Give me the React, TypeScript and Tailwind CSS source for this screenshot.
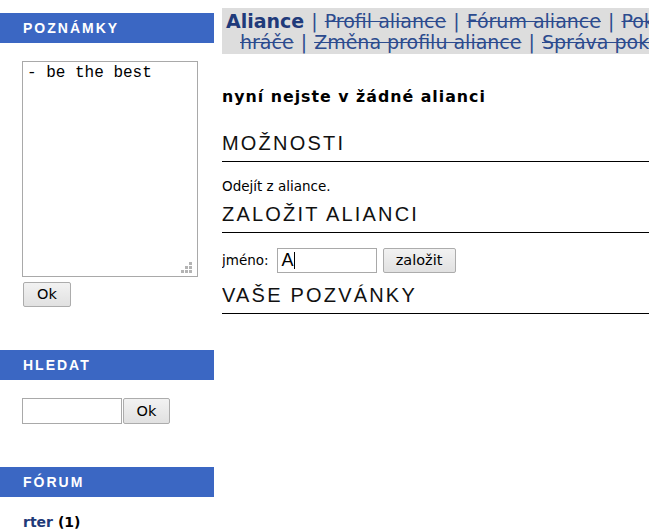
import React from "react"

const sans = "font-['DejaVu_Sans',Verdana,sans-serif]"

function SideBar({ title }: { title: string }) {
  return (
    <div className="h-[30px] bg-[#3b67c3] pl-[23px] flex items-center">
      <span className="font-['Liberation_Sans',Arial,sans-serif] font-bold text-[14px] tracking-[2px] text-white">
        {title}
      </span>
    </div>
  )
}

function Btn({ children, className = "" }: { children: React.ReactNode; className?: string }) {
  return (
    <button
      className={`h-[25px] border border-[#acacac] rounded-[2px] bg-gradient-to-b from-[#f2f2f2] to-[#e1e1e1] text-[14.5px] text-black ${sans} ${className}`}
    >
      {children}
    </button>
  )
}

function Heading({ children }: { children: React.ReactNode }) {
  return (
    <h2 className="font-['Liberation_Sans',Arial,sans-serif] text-[20px] leading-[24px] tracking-[2.2px] text-[#111] pb-[6px] border-b border-black">
      {children}
    </h2>
  )
}

function Sep() {
  return <span className="mx-[1px] text-[#2c4b8e]"> | </span>
}

function ResizeGrip() {
  const dots = [
    [2, 0],
    [1, 1],
    [2, 1],
    [0, 2],
    [1, 2],
    [2, 2],
  ]
  return (
    <svg className="absolute right-[5px] bottom-[3px]" width="11" height="11" viewBox="0 0 11 11">
      {dots.map(([c, r]) => (
        <rect key={`${c}-${r}`} x={c * 4} y={r * 4} width="3" height="3" fill="#b4b4b4" />
      ))}
    </svg>
  )
}

export default function App() {
  return (
    <div className="flex w-[649px] h-[530px] overflow-hidden bg-white">
      {/* Sidebar */}
      <aside className="w-[214px] shrink-0 pt-[13px]">
        <SideBar title="POZNÁMKY" />
        <div className="relative ml-[22px] mt-[18px] w-[176px] h-[216px] border border-[#a9a9a9] bg-white">
          <textarea
            defaultValue="- be the best"
            className="w-full h-full resize-none outline-none pl-[4px] pt-[2px] font-['Liberation_Mono','Courier_New',monospace] text-[16px] leading-[18px] text-black"
          />
          <ResizeGrip />
        </div>
        <div className="ml-[23px] mt-[4px]">
          <Btn className="w-[48px]">Ok</Btn>
        </div>

        <div className="mt-[43px]">
          <SideBar title="HLEDAT" />
        </div>
        <div className="ml-[22px] mt-[18px] flex items-center gap-[1px]">
          <input className="w-[100px] h-[26px] border border-[#a9a9a9] outline-none px-1" />
          <Btn className="w-[47px] h-[26px]">Ok</Btn>
        </div>

        <div className="mt-[43px]">
          <SideBar title="FÓRUM" />
        </div>
        <div className={`ml-[23px] mt-[16px] text-[14px] leading-[18px] font-bold ${sans}`}>
          <span className="text-[#1f3a78]">rter</span> <span className="text-black">(1)</span>
        </div>
      </aside>

      {/* Main */}
      <main className="ml-[8px] flex-1 min-w-0 pt-[8px] overflow-hidden">
        <nav className={`bg-[#dddddd] pt-[3px] pb-[1px] pl-[4px] text-[19px] leading-[21px] whitespace-nowrap text-[#2c4b8e] ${sans}`}>
          <div>
            <span className="font-bold text-[#1f3a7a]">Aliance</span>
            <Sep />
            <span className="line-through">Profil aliance</span>
            <Sep />
            <span className="line-through">Fórum aliance</span>
            <Sep />
            <span className="line-through">Pokladna aliance</span>
          </div>
          <div className="pl-[14px]">
            <span className="line-through">hráče</span>
            <Sep />
            <span className="line-through">Změna profilu aliance</span>
            <Sep />
            <span className="line-through">Správa pokladny</span>
          </div>
        </nav>

        <p className={`mt-[33px] text-[15.8px] leading-[20px] font-bold tracking-[1px] text-black ${sans}`}>
          nyní nejste v žádné alianci
        </p>

        <div className="mt-[24px]">
          <Heading>MOŽNOSTI</Heading>
        </div>
        <p className={`mt-[15px] text-[13.5px] leading-[18px] text-black ${sans}`}>Odejít z aliance.</p>

        <div className="mt-[7px]">
          <Heading>ZALOŽIT ALIANCI</Heading>
        </div>
        <div className={`mt-[15px] flex items-center text-[13.5px] text-black ${sans}`}>
          <span>jméno:</span>
          <div className="ml-[8px] w-[100px] h-[25px] border border-[#a9a9a9] flex items-center pl-[4px] font-['Liberation_Sans',Arial,sans-serif] text-[18px] text-black">
            A<span className="inline-block w-[1px] h-[17px] bg-black" />
          </div>
          <Btn className="ml-[6px] w-[73px]">založit</Btn>
        </div>

        <div className="mt-[10px]">
          <Heading>VAŠE POZVÁNKY</Heading>
        </div>
      </main>
    </div>
  )
}
